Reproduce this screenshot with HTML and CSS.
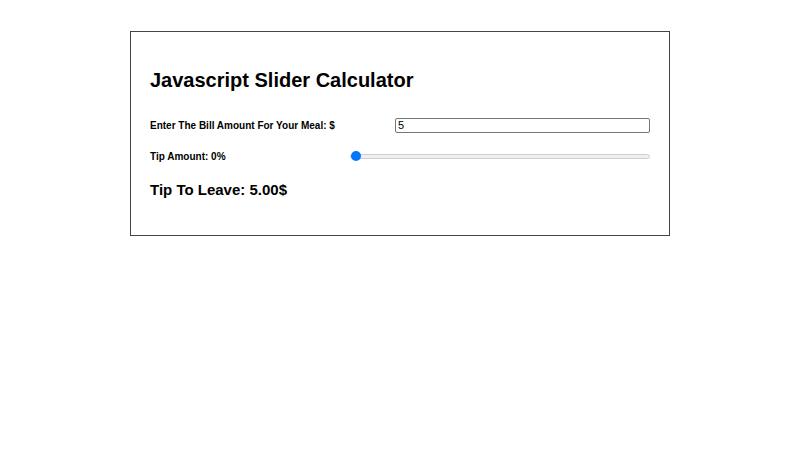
FILE: index.html
```html
<!DOCTYPE html>
<html lang="en">
<head>
  <meta charset="UTF-8">
  <meta name="viewport" content="width=device-width, initial-scale=1.0">
  <title>Javascript Slider Calculator</title>
  <link rel="stylesheet" href="styles.css">
</head>
<body>
  <div class="calculator">
    <h1 class="title">Javascript Slider Calculator</h1>

    <div class="row">
      <label for="bill" class="label">Enter The Bill Amount For Your Meal: $</label>
      <input type="text" id="bill" class="bill-input" value="5">
    </div>

    <div class="row">
      <label for="tip" class="label">Tip Amount: <span id="tip-value">0</span>%</label>
      <input type="range" id="tip" class="tip-slider" min="0" max="100" value="0">
    </div>

    <h2 class="result">Tip To Leave: <span id="total">5.00</span>$</h2>
  </div>

  <script>
    // Update tip total when bill or slider changes
    const bill = document.getElementById('bill');
    const tip = document.getElementById('tip');
    const tipValue = document.getElementById('tip-value');
    const total = document.getElementById('total');

    function update() {
      const amount = parseFloat(bill.value) || 0;
      const pct = parseInt(tip.value, 10);
      tipValue.textContent = pct;
      total.textContent = (amount + amount * pct / 100).toFixed(2);
    }

    bill.addEventListener('input', update);
    tip.addEventListener('input', update);
  </script>
</body>
</html>
```

FILE: styles.css
```css
* {
  margin: 0;
  padding: 0;
  box-sizing: border-box;
}

body {
  font-family: 'Liberation Sans', Arial, sans-serif;
  color: #000;
  background: #fff;
}

.calculator {
  width: 540px;
  margin: 31px auto 0;
  padding: 36px 19px 36px;
  border: 1px solid #444;
}

.title {
  font-size: 20px;
  font-weight: 700;
  line-height: 24px;
  margin-bottom: 25px;
}

.row {
  display: flex;
  justify-content: space-between;
  align-items: center;
  height: 16px;
  margin-bottom: 15px;
}

.label {
  font-size: 10px;
  font-weight: 700;
}

.bill-input {
  width: 255px;
  height: 15px;
  font-family: 'Liberation Sans', Arial, sans-serif;
  font-size: 11px;
  padding: 0 2px;
  border: 1px solid #767676;
  border-radius: 2px;
}

/* Slider: thin track, small blue thumb */
.tip-slider {
  -webkit-appearance: none;
  appearance: none;
  width: 300px;
  height: 5px;
  background: #efefef;
  border: 1px solid #cfcfcf;
  border-radius: 3px;
  outline: none;
}

.tip-slider::-webkit-slider-thumb {
  -webkit-appearance: none;
  appearance: none;
  width: 10px;
  height: 10px;
  border-radius: 50%;
  background: #0075ff;
  border: none;
  cursor: pointer;
}

.result {
  font-size: 15px;
  font-weight: 700;
  line-height: 18px;
  margin-top: 17px;
}
```
